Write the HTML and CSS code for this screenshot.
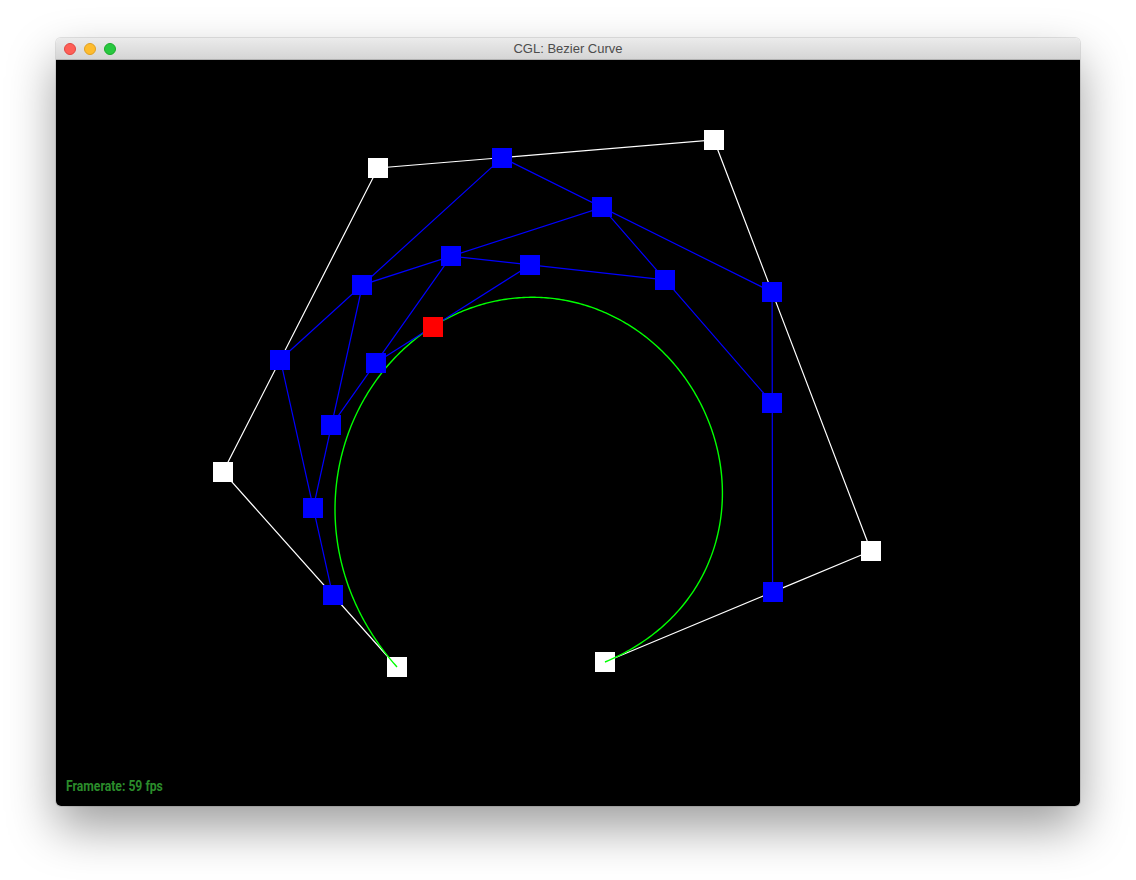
FILE: index.html
```html
<!DOCTYPE html>
<html>
<head>
<meta charset="utf-8">
<title>CGL: Bezier Curve</title>
<link rel="stylesheet" href="styles.css">
</head>
<body>
<div class="window">
  <div class="titlebar">
    <div class="lights">
      <span class="light red"></span>
      <span class="light yellow"></span>
      <span class="light green"></span>
    </div>
    <div class="title">CGL: Bezier Curve</div>
  </div>
  <div class="canvas">
    <svg id="scene" class="scene" viewBox="56 60 1024 746" width="1024" height="746" xmlns="http://www.w3.org/2000/svg"></svg>
    <div class="fps">Framerate: 59 fps</div>
  </div>
</div>
<script src="script.js"></script>
</body>
</html>
```

FILE: styles.css
```css
html, body {
  margin: 0;
  padding: 0;
  background: #ffffff;
}
body {
  padding: 38px 0 0 56px;
  min-height: 880px;
  box-sizing: border-box;
  font-family: "Liberation Sans", Arial, sans-serif;
}
.window {
  width: 1024px;
  border-radius: 5px;
  overflow: hidden;
  box-shadow: 0 0 0 1px rgba(0,0,0,0.1), 0 22px 48px rgba(0,0,0,0.38);
}
.titlebar {
  height: 21px;
  background: linear-gradient(#ebebeb, #d5d5d5);
  border-bottom: 1px solid #b1b1b1;
  display: flex;
  align-items: center;
  position: relative;
}
.lights {
  display: flex;
  gap: 8px;
  padding-left: 8px;
}
.light {
  width: 12px;
  height: 12px;
  border-radius: 50%;
  box-sizing: border-box;
}
.light.red { background: #fe5f57; border: 0.5px solid #e14640; }
.light.yellow { background: #febc2e; border: 0.5px solid #dfa023; }
.light.green { background: #28c840; border: 0.5px solid #1aab29; }
.title {
  position: absolute;
  left: 0;
  right: 0;
  text-align: center;
  font-size: 13px;
  color: #4c4c4c;
  line-height: 21px;
}
.canvas {
  height: 746px;
  background: #000000;
  position: relative;
}
.scene {
  display: block;
}
.fps {
  position: absolute;
  left: 10px;
  top: 716px;
  color: #2b8c2b;
  font-family: Roboto, "DejaVu Sans", sans-serif;
  font-weight: bold;
  font-size: 14px;
  line-height: 20px;
  transform: scaleX(0.87);
  transform-origin: left center;
  white-space: nowrap;
}
```

FILE: script.js
```js
(function () {
  var svg = document.getElementById('scene');
  var NS = 'http://www.w3.org/2000/svg';
  var P = [[397, 667], [223, 472], [378, 168], [714, 140], [871, 551], [605, 662]];
  var t = 0.37;

  function lerp(a, b, s) { return [a[0] + (b[0] - a[0]) * s, a[1] + (b[1] - a[1]) * s]; }
  function step(pts, s) {
    var out = [];
    for (var i = 0; i < pts.length - 1; i++) out.push(lerp(pts[i], pts[i + 1], s));
    return out;
  }
  function evalCurve(s) {
    var pts = P;
    while (pts.length > 1) pts = step(pts, s);
    return pts[0];
  }
  function polyline(pts, color, w) {
    var el = document.createElementNS(NS, 'polyline');
    el.setAttribute('points', pts.map(function (p) { return p[0].toFixed(2) + ',' + p[1].toFixed(2); }).join(' '));
    el.setAttribute('fill', 'none');
    el.setAttribute('stroke', color);
    el.setAttribute('stroke-width', w || '1.2');
    svg.appendChild(el);
  }
  function squares(pts, color) {
    pts.forEach(function (p) {
      var r = document.createElementNS(NS, 'rect');
      r.setAttribute('x', Math.round(p[0] - 10));
      r.setAttribute('y', Math.round(p[1] - 10));
      r.setAttribute('width', 20);
      r.setAttribute('height', 20);
      r.setAttribute('fill', color);
      svg.appendChild(r);
    });
  }

  polyline(P, '#ffffff');
  squares(P, '#ffffff');

  var curve = [];
  for (var i = 0; i <= 400; i++) curve.push(evalCurve(i / 400));
  polyline(curve, '#00ff00', '1.4');

  var levels = [];
  var pts = P;
  while (pts.length > 1) {
    pts = step(pts, t);
    levels.push(pts);
  }
  levels.forEach(function (lv) { if (lv.length > 1) polyline(lv, '#0000ff'); });
  levels.forEach(function (lv) { squares(lv, lv.length === 1 ? '#ff0000' : '#0000ff'); });
})();
```
